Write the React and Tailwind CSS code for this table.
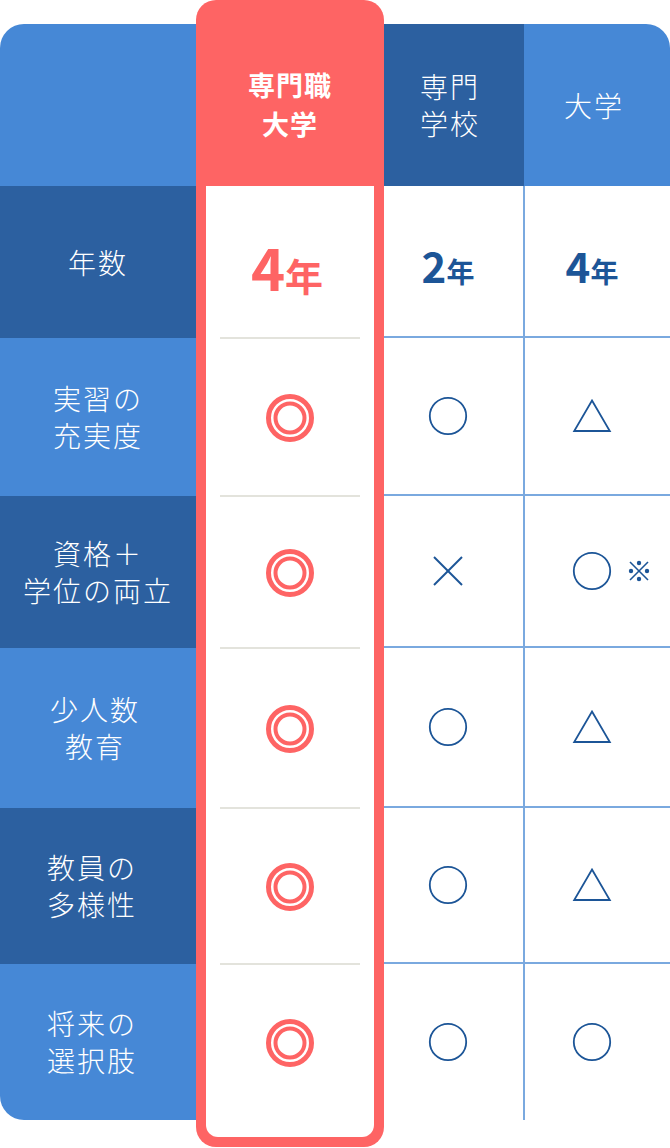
import React from "react";

const NAVY = "#1c5597";

function DoubleCircle() {
  return (
    <svg width="48" height="48" viewBox="0 0 48 48">
      <circle cx="24" cy="24" r="21.5" fill="none" stroke="#fe6464" strokeWidth="5" />
      <circle cx="24" cy="24" r="14.5" fill="none" stroke="#fe6464" strokeWidth="4" />
    </svg>
  );
}

function Circle() {
  return (
    <svg width="40" height="40" viewBox="0 0 40 40">
      <circle cx="20" cy="20" r="18.2" fill="none" stroke={NAVY} strokeWidth="1.8" />
    </svg>
  );
}

function Triangle() {
  return (
    <svg width="40" height="36" viewBox="0 0 40 36">
      <polygon points="20,2.5 37.8,33 2.2,33" fill="none" stroke={NAVY} strokeWidth="1.8" strokeLinejoin="miter" />
    </svg>
  );
}

function Cross() {
  return (
    <svg width="34" height="34" viewBox="0 0 34 34">
      <line x1="3" y1="3" x2="31" y2="31" stroke={NAVY} strokeWidth="2" />
      <line x1="31" y1="3" x2="3" y2="31" stroke={NAVY} strokeWidth="2" />
    </svg>
  );
}

function Kome() {
  return (
    <svg width="22" height="22" viewBox="0 0 22 22">
      <line x1="2" y1="2" x2="20" y2="20" stroke={NAVY} strokeWidth="1.6" />
      <line x1="20" y1="2" x2="2" y2="20" stroke={NAVY} strokeWidth="1.6" />
      <circle cx="11" cy="3" r="2.2" fill={NAVY} />
      <circle cx="11" cy="19" r="2.2" fill={NAVY} />
      <circle cx="3" cy="11" r="2.2" fill={NAVY} />
      <circle cx="19" cy="11" r="2.2" fill={NAVY} />
    </svg>
  );
}

function Years({ n, red }) {
  if (red) {
    return (
      <div className="flex items-baseline font-bold text-[#fe6464] leading-none mt-[8px] mr-[6px]">
        <span className="text-[58px]">{n}</span>
        <span className="text-[38px]">年</span>
      </div>
    );
  }
  return (
    <div className="flex items-baseline font-bold text-[#1c5597] leading-none mt-[8px]">
      <span className="text-[42px]">{n}</span>
      <span className="text-[28px]">年</span>
    </div>
  );
}

const rows = [
  { label: ["年数"], h: "h-[152px]", bg: "bg-[#2c60a0]", off: "pr-0", red: <Years n="4" red />, c3: <Years n="2" />, c4: <Years n="4" /> },
  { label: ["実習の", "充実度"], h: "h-[158px]", bg: "bg-[#4688d6]", off: "pr-0", red: <DoubleCircle />, c3: <Circle />, c4: <Triangle /> },
  { label: ["資格＋", "学位の両立"], h: "h-[152px]", bg: "bg-[#2c60a0]", off: "pr-0", red: <DoubleCircle />, c3: <Cross />, c4: <Circle />, note: true },
  { label: ["少人数", "教育"], h: "h-[160px]", bg: "bg-[#4688d6]", off: "pr-[6px]", red: <DoubleCircle />, c3: <Circle />, c4: <Triangle /> },
  { label: ["教員の", "多様性"], h: "h-[156px]", bg: "bg-[#2c60a0]", off: "pr-[12px]", red: <DoubleCircle />, c3: <Circle />, c4: <Triangle /> },
  { label: ["将来の", "選択肢"], h: "h-[156px]", bg: "bg-[#4688d6]", off: "pr-[12px]", red: <DoubleCircle />, c3: <Circle />, c4: <Circle /> },
];

export default function App() {
  return (
    <div className="w-[670px] h-[1148px] bg-white flex items-start font-['Noto_Sans_CJK_JP','Noto_Sans',sans-serif]">
      {/* label column */}
      <div className="w-[196px] mt-[24px] flex flex-col rounded-tl-[24px] rounded-bl-[24px] overflow-hidden">
        <div className="h-[162px] bg-[#4688d6]" />
        {rows.map((r, i) => (
          <div key={i} className={`${r.h} ${r.bg} ${r.off} flex flex-col items-center justify-center text-white font-light text-[28px] leading-[37px] tracking-[2px]`}>
            {r.label.map((l, j) => (
              <div key={j}>{l}</div>
            ))}
          </div>
        ))}
      </div>

      {/* highlighted column */}
      <div className="w-[188px] h-[1147px] bg-[#fe6464] rounded-[20px] flex flex-col px-[10px] pb-[10px]">
        <div className="h-[186px] shrink-0 flex flex-col items-center justify-center text-white font-bold text-[27px] leading-[39px] tracking-[1px] pt-[22px]">
          <div>専門職</div>
          <div>大学</div>
        </div>
        <div className="flex-1 bg-white rounded-b-[12px] flex flex-col">
          {rows.map((r, i) => (
            <div key={i} className={`${r.h} flex flex-col`}>
              {i > 0 && <div className="h-[2px] mx-[14px] -mt-[1px] bg-[#e3e3dc]" />}
              <div className="flex-1 flex items-center justify-center">{r.red}</div>
            </div>
          ))}
        </div>
      </div>

      {/* other columns */}
      <div className="w-[286px] mt-[24px] flex flex-col">
        <div className="h-[162px] flex text-white font-light text-[28px] leading-[37px] tracking-[2px]">
          <div className="w-[140px] bg-[#2c60a0] flex flex-col items-center justify-center pr-[8px]">
            <div>専門</div>
            <div>学校</div>
          </div>
          <div className="flex-1 bg-[#4688d6] rounded-tr-[24px] flex flex-col items-center justify-center pr-[6px]">
            <div>大学</div>
          </div>
        </div>
        {rows.map((r, i) => (
          <div key={i} className={`${r.h} flex ${i < rows.length - 1 ? "border-b-2 border-[#7aa9df]" : ""}`}>
            <div className="w-[141px] border-r-2 border-[#7aa9df] flex items-center justify-center pr-[11px]">{r.c3}</div>
            <div className="flex-1 relative flex items-center justify-center pr-[11px]">
              {r.c4}
              {r.note && (
                <div className="absolute left-[103px] top-1/2 -translate-y-1/2">
                  <Kome />
                </div>
              )}
            </div>
          </div>
        ))}
      </div>
    </div>
  );
}
